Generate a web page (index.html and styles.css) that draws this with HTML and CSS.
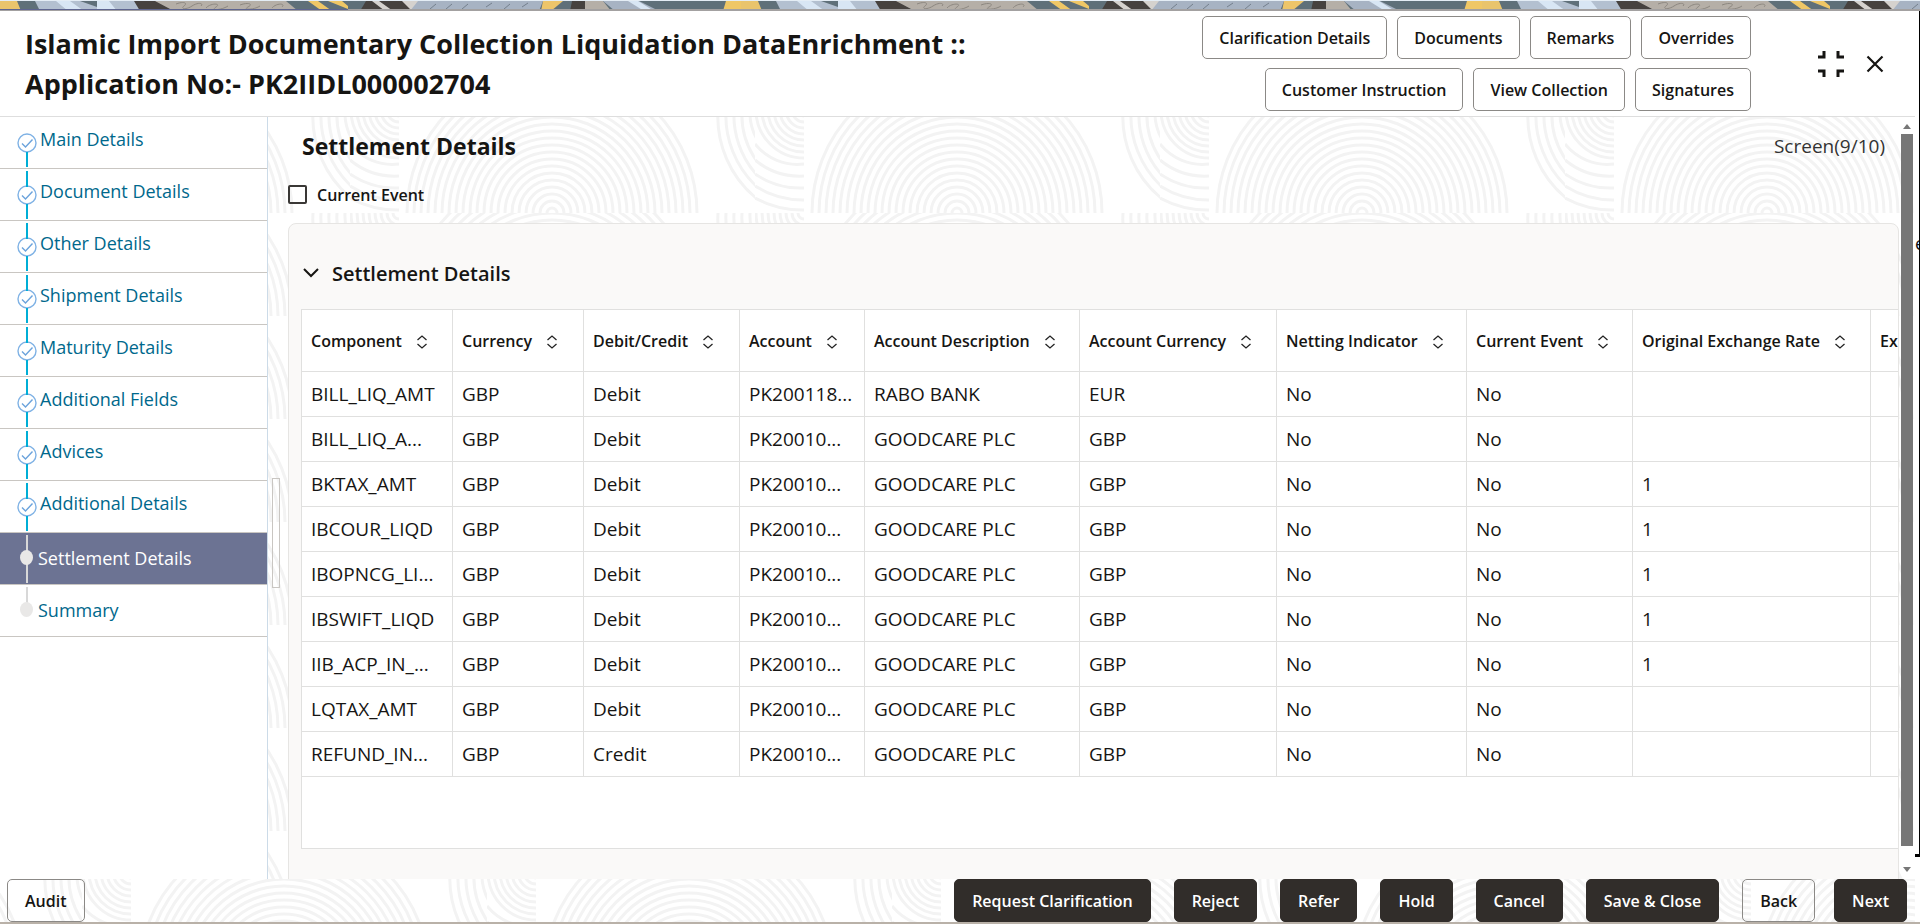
FILE: index.html
```html
<!DOCTYPE html>
<html lang="en">
<head>
    <meta charset="UTF-8">
    <meta name="viewport" content="width=device-width, initial-scale=1.0">
    <title>Settlement Details</title>
    <link rel="stylesheet" href="styles.css">
</head>
<body>
    <!-- Shared icons -->
    <svg class="sprite" width="0" height="0" aria-hidden="true">
        <symbol id="check" viewBox="0 0 20 20">
            <circle cx="10" cy="10" r="9" fill="none" stroke="#7fb2e5" stroke-width="1.4"/>
            <path d="M5 10.5l3.5 3.5L15.500 6.500" fill="none" stroke="#6ba3dc" stroke-width="1.4"/>
        </symbol>
        <symbol id="sort" viewBox="0 0 12 14">
            <path d="M1.500 5L6 1l4.500 4M1.500 9L6 13l4.500-4" fill="none" stroke="#222" stroke-width="1.3"/>
        </symbol>
    </svg>

    <svg class="banner" width="100%" height="10" aria-hidden="true">
        <defs>
            <pattern id="strip" width="741" height="10" patternUnits="userSpaceOnUse">
                <rect width="741" height="10" fill="#5f7079"/>
                <path d="M0 0h17l4 10H0z" fill="#e9c46c"/>
                <path d="M35 0h100l12 10H40z" fill="#b3c0d0"/>
                <path d="M56 0h14l14 10H68zM97 0h12l8 10H97z" fill="#d8e6f4"/>
                <path d="M80 0h17v6z" fill="#5f7079"/>
                <path d="M134 0h22l18 10h-34z" fill="#46423f"/>
                <path d="M155 0h131l12 10H174z" fill="#b5afa7"/>
                <path d="M176 3c8-3 12-1 8 2s2 4 8 0 12-3 9 0M206 7c4-5 16-5 10-1s6 3 12-1M240 4c8-3 14-1 8 2s6 3 12-1M272 7c4-5 14-5 10-1" fill="none" stroke="#8c8780"/>
                <path d="M308 0h10l14 10h-10zM328 0h14l6 5v3z" fill="#efc766"/>
                <path d="M366 0h42l14 10h-62z" fill="#46423f"/>
                <path d="M372 0h7l14 10h-8zM402 0h18l-8 10z" fill="#d5d2ce"/>
                <path d="M418 0h125l-4 10H410z" fill="#a7b3c3"/>
                <path d="M430 8l6-5M446 8l6-5M462 8l6-5M486 6l6-4M504 8l6-5M522 6l6-4" stroke="#74808d"/>
                <path d="M543 0h20l-12 10h-10z" fill="#edc56a"/>
                <path d="M572 0h13v10h-15z" fill="#46423f"/>
                <path d="M585 0h18l8 10h-26z" fill="#b5afa7"/>
                <path d="M603 0h36l20 10h-44z" fill="#a7b3c3"/>
                <path d="M628 0h10l16 10h-10z" fill="#d8e6f4"/>
                <path d="M726 0h15v10h-18z" fill="#efc766"/>
            </pattern>
        </defs>
        <rect width="100%" height="10" fill="url(#strip)"/>
    </svg>
    <div class="progress"><span></span></div>

    <div class="page">
        <div class="dialog">
            <header class="title-bar">
                <h1>Islamic Import Documentary Collection Liquidation DataEnrichment :: Application No:- PK2IIDL000002704</h1>
                <div class="header-actions">
                    <button type="button" class="btn">Clarification Details</button>
                    <button type="button" class="btn">Documents</button>
                    <button type="button" class="btn">Remarks</button>
                    <button type="button" class="btn">Overrides</button>
                    <button type="button" class="btn">Customer Instruction</button>
                    <button type="button" class="btn">View Collection</button>
                    <button type="button" class="btn">Signatures</button>
                </div>
                <div class="window-actions">
                    <button type="button" class="icon-btn" aria-label="Collapse">
                        <svg width="26" height="26" viewBox="0 0 26 26"><path d="M0 6h6V0M20 0v6h6M0 20h6v6M20 26v-6h6" fill="none" stroke="#161513" stroke-width="3"/></svg>
                    </button>
                    <button type="button" class="icon-btn" aria-label="Close">
                        <svg width="18" height="18" viewBox="0 0 18 18"><path d="M1.500 1.500l15 15M16.500 1.500l-15 15" fill="none" stroke="#161513" stroke-width="2.200"/></svg>
                    </button>
                </div>
            </header>

            <div class="body">
                <nav class="steps">
                    <a href="#main" class="step done"><span class="mark"><svg width="20" height="20"><use href="#check"/></svg></span>Main Details</a>
                    <a href="#document" class="step done"><span class="mark"><svg width="20" height="20"><use href="#check"/></svg></span>Document Details</a>
                    <a href="#other" class="step done"><span class="mark"><svg width="20" height="20"><use href="#check"/></svg></span>Other Details</a>
                    <a href="#shipment" class="step done"><span class="mark"><svg width="20" height="20"><use href="#check"/></svg></span>Shipment Details</a>
                    <a href="#maturity" class="step done"><span class="mark"><svg width="20" height="20"><use href="#check"/></svg></span>Maturity Details</a>
                    <a href="#fields" class="step done"><span class="mark"><svg width="20" height="20"><use href="#check"/></svg></span>Additional Fields</a>
                    <a href="#advices" class="step done"><span class="mark"><svg width="20" height="20"><use href="#check"/></svg></span>Advices</a>
                    <a href="#additional" class="step done"><span class="mark"><svg width="20" height="20"><use href="#check"/></svg></span>Additional Details</a>
                    <a href="#settlement" class="step active"><span class="mark"><i class="dot"></i></span>Settlement Details</a>
                    <a href="#summary" class="step last"><span class="mark"><i class="dot"></i></span>Summary</a>
                </nav>

                <main class="content">
                    <svg class="waves" width="100%" height="100%" aria-hidden="true">
                        <defs>
                            <pattern id="waves" x="82" y="-7" width="405" height="103" patternUnits="userSpaceOnUse">
                                <g fill="none" stroke="#f3f3f3" stroke-width="3">
                                    <circle cx="202" cy="103" r="5"/><circle cx="202" cy="103" r="12"/><circle cx="202" cy="103" r="19"/>
                                    <circle cx="202" cy="103" r="26"/><circle cx="202" cy="103" r="33"/><circle cx="202" cy="103" r="40"/>
                                    <circle cx="202" cy="103" r="47"/><circle cx="202" cy="103" r="54"/><circle cx="202" cy="103" r="61"/>
                                    <circle cx="202" cy="103" r="68"/><circle cx="202" cy="103" r="75"/><circle cx="202" cy="103" r="82"/>
                                    <circle cx="202" cy="103" r="89"/><circle cx="202" cy="103" r="96"/><circle cx="202" cy="103" r="103"/>
                                    <circle cx="202" cy="103" r="110"/><circle cx="202" cy="103" r="117"/><circle cx="202" cy="103" r="124"/>
                                    <circle cx="202" cy="103" r="131"/><circle cx="202" cy="103" r="138"/><circle cx="202" cy="103" r="145"/>
                                    <path d="M43 0a6 6 0 0 0 6 6M37 0a12 12 0 0 0 12 12M31 0a18 18 0 0 0 18 18M25 0a24 24 0 0 0 24 24M19 0a30 30 0 0 0 30 30M13 0a36 36 0 0 0 36 36M7 0a42 42 0 0 0 42 42M1 0a48 48 0 0 0 48 48"/>
                                    <path d="M400 0a54 54 0 0 0 10 34M392 0a80 80 0 0 0 14 50M384 0a90 90 0 0 0 22 64M376 0a98 98 0 0 0 30 76M368 0a106 106 0 0 0 38 88"/>
                                    <path d="M0 34a54 54 0 0 0 49 20M0 50a70 70 0 0 0 49 16M0 64a80 80 0 0 0 49 14M0 76a90 90 0 0 0 49 14M0 88a100 100 0 0 0 49 12"/>
                                </g>
                            </pattern>
                        </defs>
                        <rect width="100%" height="100%" fill="url(#waves)"/>
                    </svg>
                    <span class="splitter"></span>

                    <div class="content-head">
                        <h2>Settlement Details</h2>
                        <span class="screen-no">Screen(9/10)</span>
                    </div>
                    <label class="event-check"><input type="checkbox">Current Event</label>

                    <section class="panel">
                        <h3><svg width="16" height="10" viewBox="0 0 16 10"><path d="M1 1l7 7 7-7" fill="none" stroke="#161513" stroke-width="2"/></svg>Settlement Details</h3>
                        <div class="table-container">
                            <table>
                                <colgroup>
                                    <col class="c-component"><col class="c-currency"><col class="c-type"><col class="c-account"><col class="c-description">
                                    <col class="c-acc-currency"><col class="c-netting"><col class="c-event"><col class="c-rate"><col class="c-exchange">
                                </colgroup>
                                <thead>
                                    <tr>
                                        <th>Component<svg width="12" height="14"><use href="#sort"/></svg></th>
                                        <th>Currency<svg width="12" height="14"><use href="#sort"/></svg></th>
                                        <th>Debit/Credit<svg width="12" height="14"><use href="#sort"/></svg></th>
                                        <th>Account<svg width="12" height="14"><use href="#sort"/></svg></th>
                                        <th>Account Description<svg width="12" height="14"><use href="#sort"/></svg></th>
                                        <th>Account Currency<svg width="12" height="14"><use href="#sort"/></svg></th>
                                        <th>Netting Indicator<svg width="12" height="14"><use href="#sort"/></svg></th>
                                        <th>Current Event<svg width="12" height="14"><use href="#sort"/></svg></th>
                                        <th>Original Exchange Rate<svg width="12" height="14"><use href="#sort"/></svg></th>
                                        <th>Ex</th>
                                    </tr>
                                </thead>
                                <tbody>
                                    <tr><td>BILL_LIQ_AMT</td><td>GBP</td><td>Debit</td><td>PK200118...</td><td>RABO BANK</td><td>EUR</td><td>No</td><td>No</td><td></td><td></td></tr>
                                    <tr><td>BILL_LIQ_A...</td><td>GBP</td><td>Debit</td><td>PK20010...</td><td>GOODCARE PLC</td><td>GBP</td><td>No</td><td>No</td><td></td><td></td></tr>
                                    <tr><td>BKTAX_AMT</td><td>GBP</td><td>Debit</td><td>PK20010...</td><td>GOODCARE PLC</td><td>GBP</td><td>No</td><td>No</td><td>1</td><td></td></tr>
                                    <tr><td>IBCOUR_LIQD</td><td>GBP</td><td>Debit</td><td>PK20010...</td><td>GOODCARE PLC</td><td>GBP</td><td>No</td><td>No</td><td>1</td><td></td></tr>
                                    <tr><td>IBOPNCG_LI...</td><td>GBP</td><td>Debit</td><td>PK20010...</td><td>GOODCARE PLC</td><td>GBP</td><td>No</td><td>No</td><td>1</td><td></td></tr>
                                    <tr><td>IBSWIFT_LIQD</td><td>GBP</td><td>Debit</td><td>PK20010...</td><td>GOODCARE PLC</td><td>GBP</td><td>No</td><td>No</td><td>1</td><td></td></tr>
                                    <tr><td>IIB_ACP_IN_...</td><td>GBP</td><td>Debit</td><td>PK20010...</td><td>GOODCARE PLC</td><td>GBP</td><td>No</td><td>No</td><td>1</td><td></td></tr>
                                    <tr><td>LQTAX_AMT</td><td>GBP</td><td>Debit</td><td>PK20010...</td><td>GOODCARE PLC</td><td>GBP</td><td>No</td><td>No</td><td></td><td></td></tr>
                                    <tr><td>REFUND_IN...</td><td>GBP</td><td>Credit</td><td>PK20010...</td><td>GOODCARE PLC</td><td>GBP</td><td>No</td><td>No</td><td></td><td></td></tr>
                                </tbody>
                            </table>
                        </div>
                    </section>

                    <div class="scrollbar" aria-hidden="true">
                        <svg width="8" height="5"><path d="M4 0l4 5H0z" fill="#777"/></svg>
                        <span class="thumb"></span>
                        <svg width="8" height="5"><path d="M0 0h8L4 5z" fill="#777"/></svg>
                    </div>
                </main>
            </div>

            <footer class="footer">
                <svg class="waves" width="100%" height="100%" aria-hidden="true"><rect width="100%" height="100%" fill="url(#waves)"/></svg>
                <button type="button" class="btn audit">Audit</button>
                <button type="button" class="btn dark">Request Clarification</button>
                <button type="button" class="btn dark">Reject</button>
                <button type="button" class="btn dark">Refer</button>
                <button type="button" class="btn dark">Hold</button>
                <button type="button" class="btn dark">Cancel</button>
                <button type="button" class="btn dark">Save &amp; Close</button>
                <button type="button" class="btn">Back</button>
                <button type="button" class="btn dark next">Next</button>
            </footer>
        </div>
        <div class="behind"><span>e</span></div>
    </div>
</body>
</html>
```
FILE: styles.css
```css
* {
    box-sizing: border-box;
}
body {
    margin: 0;
    height: 100vh;
    display: flex;
    flex-direction: column;
    overflow: hidden;
    font-family: "Open Sans", "Noto Sans", sans-serif;
    font-size: 18px;
    color: #161513;
    background: #fff;
}
h1, h2, h3 {
    margin: 0;
}
button {
    font-family: inherit;
}
.sprite {
    position: absolute;
}
.banner {
    display: block;
    height: 9px;
    flex: none;
    border-top: 1px solid #e4edf5;
}
.progress {
    height: 2px;
    flex: none;
    background: #a3a1a1;
}
.progress span {
    display: block;
    width: 348px;
    height: 1px;
    background: #5e6590;
}
.page {
    flex: 1;
    min-height: 0;
    display: flex;
    border-bottom: 2px solid #b9b1a8;
}
.dialog {
    flex: 1;
    min-width: 0;
    display: flex;
    flex-direction: column;
}

/* Title bar */
.title-bar {
    flex: none;
    height: 106px;
    display: flex;
    align-items: center;
    padding: 0 31px 0 25px;
    border-bottom: 1px solid #dedede;
}
h1 {
    flex: 1;
    padding-right: 140px;
    font-size: 27px;
    line-height: 40px;
    font-weight: 700;
}
.header-actions {
    width: 568px;
    display: flex;
    flex-wrap: wrap;
    justify-content: flex-end;
    gap: 9px 10px;
}
.btn {
    height: 43px;
    padding: 0 16px;
    font-size: 16px;
    font-weight: 600;
    color: #161513;
    background: #fff;
    border: 1px solid #8b8986;
    border-radius: 5px;
    white-space: nowrap;
}
.window-actions {
    display: flex;
    align-items: center;
    gap: 22px;
    margin-left: 67px;
}
.icon-btn {
    display: flex;
    padding: 0;
    border: 0;
    background: none;
}

/* Step list */
.body {
    flex: 1;
    min-height: 0;
    display: flex;
}
.steps {
    flex: none;
    width: 268px;
    border-right: 1px solid #ccdbe8;
}
.step {
    position: relative;
    display: flex;
    height: 52px;
    padding: 8px 0 0 17px;
    line-height: 28px;
    color: #00688c;
    text-decoration: none;
    border-bottom: 1px solid #c9c6c2;
}
.mark {
    width: 20px;
    margin: 8px 3px 0 0;
    line-height: 0;
}
.step::before, .step.done::after {
    content: "";
    position: absolute;
    left: 26px;
    width: 2px;
    background: #00aed6;
}
.step::before {
    top: 2px;
    height: 16px;
}
.step.done::after {
    top: 35px;
    height: 15px;
}
.step:first-child::before {
    display: none;
}
.step.active, .step.last {
    padding-top: 11px;
}
.step.active .mark, .step.last .mark {
    margin: 6px 1px 0 0;
}
.step.active {
    color: #fff;
    background: #6c7393;
}
.step.active::before, .step.last::before {
    background: #d8d8d8;
}
.step.active::before {
    height: 48px;
}
.dot {
    position: relative;
    display: block;
    width: 13px;
    height: 15px;
    margin-left: 3px;
    border-radius: 50%;
    background: #e9e8e7;
}

/* Content */
.content {
    position: relative;
    flex: 1;
    min-width: 0;
    overflow: hidden;
    padding: 0 16px 0 20px;
}
.waves {
    position: absolute;
    left: 0;
    top: 0;
    z-index: -1;
}
.splitter {
    position: absolute;
    left: 4px;
    top: 361px;
    width: 8px;
    height: 110px;
    border: 1px solid #c9c6c2;
}
.content-head {
    display: flex;
    justify-content: space-between;
    align-items: center;
    height: 57px;
    padding: 0 14px;
}
h2 {
    font-size: 23px;
    font-weight: 700;
}
.screen-no {
    font-size: 19px;
    color: #333;
}
.event-check {
    display: flex;
    align-items: center;
    gap: 10px;
    height: 41px;
    font-size: 16px;
    font-weight: 600;
}
.event-check input {
    appearance: none;
    width: 19px;
    height: 19px;
    margin: 0;
    border: 2px solid #3a3836;
    border-radius: 2px;
}
.panel {
    margin-top: 8px;
    height: 800px;
    padding: 0 0 0 12px;
    background: #faf9f8;
    border: 1px solid #e6e5e3;
    border-radius: 8px;
}
h3 {
    display: flex;
    align-items: center;
    gap: 13px;
    height: 85px;
    padding: 13px 0 0 2px;
    font-size: 20px;
    font-weight: 600;
}
.table-container {
    height: 540px;
    overflow: hidden;
    background: #fff;
    border: 1px solid #e0e0df;
    border-right: 0;
}
table {
    width: 1768px;
    table-layout: fixed;
    border-collapse: separate;
    border-spacing: 0;
}
th, td {
    height: 45px;
    padding: 0 0 0 9px;
    text-align: left;
    white-space: nowrap;
    border-right: 1px solid #e0e0df;
    border-bottom: 1px solid #e0e0df;
}
td {
    font-size: 19px;
    line-height: 24px;
}
th {
    height: 62px;
    font-size: 16px;
    font-weight: 600;
}
th svg {
    margin-left: 14px;
    vertical-align: middle;
}
.c-component { width: 151px; }
.c-currency { width: 131px; }
.c-type { width: 156px; }
.c-account { width: 125px; }
.c-description { width: 215px; }
.c-acc-currency { width: 197px; }
.c-netting { width: 190px; }
.c-event { width: 166px; }
.c-rate { width: 238px; }
.c-exchange { width: 199px; }

.scrollbar {
    position: absolute;
    top: 0;
    right: 2px;
    bottom: 0;
    width: 12px;
    padding: 7px 0;
    display: flex;
    flex-direction: column;
    align-items: center;
    gap: 5px;
}
.thumb {
    flex: 1;
    width: 12px;
    margin-bottom: 16px;
    background: #777;
}

/* Footer */
.footer {
    position: relative;
    flex: none;
    display: flex;
    gap: 23px;
    padding: 0 8px 0 7px;
}
.footer .btn {
    padding: 0 17px;
    background: transparent;
}
.footer .audit {
    margin-right: auto;
}
.footer .btn.dark {
    color: #fff;
    background: #312d2a;
    border-color: #312d2a;
}
.footer .next {
    margin-left: -4px;
}

/* Edge of the page under the dialog */
.behind {
    flex: none;
    width: 5px;
    height: 846px;
    padding-top: 220px;
    overflow: hidden;
    border-right: 1px solid #000;
    border-bottom: 3px solid #000;
}
```
